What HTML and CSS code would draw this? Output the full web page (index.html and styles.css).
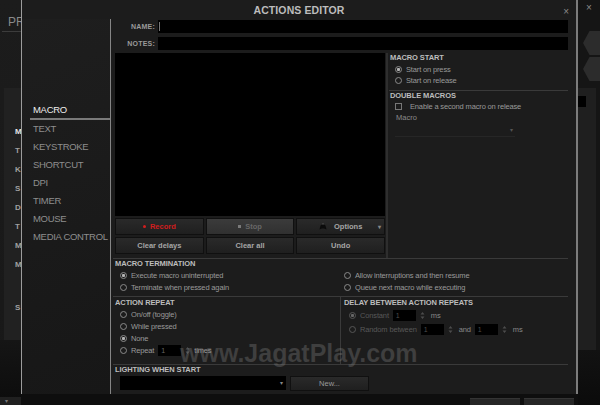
FILE: index.html
```html
<!DOCTYPE html>
<html lang="en">
<head>
    <meta charset="UTF-8">
    <meta name="viewport" content="width=device-width, initial-scale=1.0">
    <title>Actions Editor</title>
    <link rel="stylesheet" href="styles.css">
</head>
<body>
    <div class="app">
        <!-- app behind the dialog, left edge -->
        <div class="side-left">
            <div class="side-top"><span class="side-tab">PR</span></div>
            <div class="side-panel">
                <div class="side-item active">M</div>
                <div class="side-item">T</div>
                <div class="side-item">K</div>
                <div class="side-item">S</div>
                <div class="side-item">D</div>
                <div class="side-item">T</div>
                <div class="side-item">M</div>
                <div class="side-item">M</div>
                <div class="side-item gap">S</div>
            </div>
            <div class="side-bottom">
                <div class="side-bar">▾</div>
            </div>
        </div>

        <div class="center">
            <div class="dialog">
                <div class="dialog-head">
                    <span></span>
                    <span class="dialog-title">ACTIONS EDITOR</span>
                    <span class="dialog-close">×</span>
                </div>
                <div class="dialog-body">
                    <nav class="nav">
                        <div class="nav-item active">MACRO</div>
                        <div class="nav-item">TEXT</div>
                        <div class="nav-item">KEYSTROKE</div>
                        <div class="nav-item">SHORTCUT</div>
                        <div class="nav-item">DPI</div>
                        <div class="nav-item">TIMER</div>
                        <div class="nav-item">MOUSE</div>
                        <div class="nav-item">MEDIA CONTROL</div>
                    </nav>

                    <div class="editor">
                        <div class="fields">
                            <div class="field">
                                <span class="field-label">NAME:</span>
                                <div class="input"><span class="caret"></span></div>
                            </div>
                            <div class="field">
                                <span class="field-label">NOTES:</span>
                                <div class="input"></div>
                            </div>
                        </div>

                        <div class="upper">
                            <div class="macro-col">
                                <div class="macro-list"></div>
                                <div class="btn-grid">
                                    <div class="btn btn-record"><span class="rec-dot"></span>Record</div>
                                    <div class="btn btn-stop"><span class="stop-sq"></span>Stop</div>
                                    <div class="btn btn-options">
                                        <span></span>
                                        <span class="opt-label">
                                            <svg class="opt-icon" viewBox="0 0 8 7"><path d="M0.5 6.5 1.5 2.5 3 1.5 5 1.5 6.5 2.5 7.5 6.5 5 5.5 3 5.5Z" fill="#0b0b0b"/><rect x="3" y="0" width="2" height="1.5" fill="#3c3c3c"/></svg>
                                            Options
                                        </span>
                                        <span class="opt-caret">▾</span>
                                    </div>
                                    <div class="btn">Clear delays</div>
                                    <div class="btn">Clear all</div>
                                    <div class="btn">Undo</div>
                                </div>
                            </div>

                            <div class="start-col">
                                <div class="section-title">MACRO START</div>
                                <div class="start-list">
                                    <div class="opt-row"><span class="radio on"></span>Start on press</div>
                                    <div class="opt-row"><span class="radio"></span>Start on release</div>
                                </div>
                                <div class="sub-rule"></div>
                                <div class="section-title">DOUBLE MACROS</div>
                                <div class="opt-row check-row"><span class="check"></span>Enable a second macro on release</div>
                                <div class="macro-label">Macro</div>
                                <div class="select-line">▾</div>
                            </div>
                        </div>

                        <div class="rule"></div>

                        <div class="term">
                            <div class="section-title">MACRO TERMINATION</div>
                            <div class="term-grid">
                                <div class="opt-row"><span class="radio on"></span>Execute macro uninterrupted</div>
                                <div class="opt-row"><span class="radio"></span>Allow interruptions and then resume</div>
                                <div class="opt-row"><span class="radio"></span>Terminate when pressed again</div>
                                <div class="opt-row"><span class="radio"></span>Queue next macro while executing</div>
                            </div>
                        </div>

                        <div class="rule"></div>

                        <div class="repeat">
                            <div class="repeat-col">
                                <div class="section-title">ACTION REPEAT</div>
                                <div class="opt-row"><span class="radio"></span>On/off (toggle)</div>
                                <div class="opt-row"><span class="radio"></span>While pressed</div>
                                <div class="opt-row"><span class="radio on"></span>None</div>
                                <div class="opt-row">
                                    <span class="radio"></span>Repeat
                                    <span class="num">1</span>
                                    <svg class="spin" viewBox="0 0 5 9"><path d="M0.5 3.5 2.5 1 4.5 3.5ZM0.5 5.5 2.5 8 4.5 5.5Z" fill="#4c4c4c"/></svg>
                                    times
                                </div>
                            </div>
                            <div class="delay-col">
                                <div class="section-title">DELAY BETWEEN ACTION REPEATS</div>
                                <div class="opt-row">
                                    <span class="radio on"></span>Constant
                                    <span class="num">1</span>
                                    <svg class="spin" viewBox="0 0 5 9"><path d="M0.5 3.5 2.5 1 4.5 3.5ZM0.5 5.5 2.5 8 4.5 5.5Z" fill="#4c4c4c"/></svg>
                                    <span class="unit">ms</span>
                                </div>
                                <div class="opt-row">
                                    <span class="radio"></span>Random between
                                    <span class="num">1</span>
                                    <svg class="spin" viewBox="0 0 5 9"><path d="M0.5 3.5 2.5 1 4.5 3.5ZM0.5 5.5 2.5 8 4.5 5.5Z" fill="#4c4c4c"/></svg>
                                    <span class="unit">and</span>
                                    <span class="num">1</span>
                                    <svg class="spin" viewBox="0 0 5 9"><path d="M0.5 3.5 2.5 1 4.5 3.5ZM0.5 5.5 2.5 8 4.5 5.5Z" fill="#4c4c4c"/></svg>
                                    <span class="unit">ms</span>
                                </div>
                            </div>
                        </div>

                        <div class="rule"></div>

                        <div class="lighting">
                            <div class="section-title">LIGHTING WHEN START</div>
                            <div class="lighting-row">
                                <div class="select">▾</div>
                                <div class="btn btn-new">New...</div>
                            </div>
                        </div>
                    </div>
                </div>
                <div class="watermark">www.JagatPlay.com</div>
            </div>
            <div class="footer-bar">
                <span class="footer-btn"></span>
                <span class="footer-btn"></span>
            </div>
        </div>

        <!-- app behind the dialog, right edge -->
        <div class="side-right">
            <div class="rs-top">×</div>
            <div class="rs-hexes">
                <span class="hex"></span>
                <span class="hex"></span>
            </div>
            <div class="rs-panel"><span class="rs-key"></span></div>
            <div class="rs-bottom"></div>
        </div>
    </div>
</body>
</html>
```

FILE: styles.css
```css
* {
    box-sizing: border-box;
}
body {
    margin: 0;
    width: 600px;
    height: 405px;
    overflow: hidden;
    background-color: #121212;
    font-family: "Liberation Sans", Arial, sans-serif;
    color: #999;
}
.app {
    display: flex;
    height: 405px;
}

/* background app - left strip */
.side-left {
    width: 21px;
    flex-shrink: 0;
    overflow: hidden;
    display: flex;
    flex-direction: column;
    background: linear-gradient(#1c1c1c, #181818);
}
.side-top {
    height: 88px;
    flex-shrink: 0;
    padding: 16px 0 0 2px;
}
.side-tab {
    display: block;
    padding: 0 0 3px 6px;
    font-size: 12px;
    line-height: 12px;
    color: #8a8a8a;
    white-space: nowrap;
    border-bottom: 1px solid #3c3c3c;
}
.side-panel {
    height: 252px;
    flex-shrink: 0;
    margin-left: 4px;
    padding: 34px 0 0 11px;
    background: #212121;
}
.side-item {
    height: 19px;
    line-height: 19px;
    font-size: 8px;
    font-weight: bold;
    color: #a0a0a0;
    white-space: nowrap;
}
.side-item.active {
    color: #e6e6e6;
}
.side-item.gap {
    margin-top: 24px;
}
.side-bottom {
    flex: 1;
    display: flex;
    flex-direction: column;
    justify-content: flex-end;
    background: linear-gradient(#151515, #0c0c0c);
}
.side-bar {
    height: 8px;
    padding-left: 5px;
    background: #202020;
    font-size: 6px;
    line-height: 8px;
    color: #777;
}

/* dialog */
.center {
    width: 557px;
    flex-shrink: 0;
    display: flex;
    flex-direction: column;
}
.dialog {
    position: relative;
    height: 394px;
    flex-shrink: 0;
    background: #1c1c1c;
    border-left: 1px solid #9c9c9c;
    border-right: 2px solid #7c7c7c;
}
.dialog-head {
    height: 19px;
    display: grid;
    grid-template-columns: 1fr auto 1fr;
    align-items: center;
}
.dialog-title {
    font-size: 10.5px;
    font-weight: bold;
    color: #bdbdbd;
    letter-spacing: 0.1px;
}
.dialog-close {
    justify-self: end;
    padding: 4px 7px 0 0;
    font-size: 10px;
    color: #8a8a8a;
}
.dialog-body {
    display: flex;
    height: 375px;
}
.nav {
    width: 89px;
    flex-shrink: 0;
    padding-top: 83px;
    background: linear-gradient(160deg, #1e1e1e, #171717);
    border-right: 1px solid #858585;
}
.nav-item {
    height: 18px;
    line-height: 18px;
    padding-left: 11px;
    font-size: 9.5px;
    letter-spacing: -0.3px;
    color: #8e8e8e;
    white-space: nowrap;
}
.nav-item.active {
    margin-left: 8px;
    padding-left: 3px;
    line-height: 16px;
    color: #ededed;
    border-bottom: 2px solid #7a7a7a;
}

.editor {
    flex: 1;
    display: flex;
    flex-direction: column;
    padding: 1px 8px 0 4px;
}
.fields {
    display: flex;
    flex-direction: column;
    gap: 4px;
    margin-bottom: 3px;
}
.field {
    display: flex;
    align-items: center;
    gap: 3px;
    height: 13px;
}
.field-label {
    width: 40px;
    text-align: right;
    font-size: 7px;
    font-weight: bold;
    letter-spacing: 0.2px;
    color: #9a9a9a;
}
.input {
    flex: 1;
    height: 13px;
    padding: 2px 0 0 1px;
    background: #000;
}
.caret {
    display: block;
    width: 1px;
    height: 9px;
    background: #777;
}

.upper {
    display: grid;
    grid-template-columns: 271px 1fr;
    height: 205px;
    flex-shrink: 0;
}
.macro-col {
    display: flex;
    flex-direction: column;
    gap: 2px;
    padding-right: 1px;
}
.macro-list {
    height: 163px;
    background: #000;
}
.btn-grid {
    display: grid;
    grid-template-columns: repeat(3, 1fr);
    grid-auto-rows: 17px;
    gap: 2px;
}
.btn {
    display: flex;
    align-items: center;
    justify-content: center;
    gap: 4px;
    background: linear-gradient(#2a2a2a, #1f1f1f);
    border: 1px solid #101010;
    font-size: 7.5px;
    font-weight: bold;
    color: #a6a6a6;
}
.btn-record {
    color: #d11e1e;
}
.rec-dot {
    width: 3px;
    height: 3px;
    border-radius: 50%;
    background: #d11e1e;
}
.btn-stop {
    background: linear-gradient(#3b3b3b, #303030);
    color: #676767;
}
.stop-sq {
    width: 3px;
    height: 3px;
    background: #7a7a7a;
}
.btn-options {
    display: grid;
    grid-template-columns: 1fr auto 1fr;
}
.opt-label {
    display: flex;
    align-items: center;
    gap: 7px;
}
.opt-icon {
    width: 8px;
    height: 7px;
}
.opt-caret {
    justify-self: end;
    padding-right: 3px;
    font-size: 6px;
    color: #888;
}

.section-title {
    font-size: 7.5px;
    font-weight: bold;
    letter-spacing: -0.1px;
    color: #bdbdbd;
    white-space: nowrap;
}
.opt-row {
    display: flex;
    align-items: center;
    gap: 4px;
    font-size: 7.5px;
    letter-spacing: -0.15px;
    color: #9a9a9a;
    white-space: nowrap;
}
.radio {
    width: 7px;
    height: 7px;
    flex-shrink: 0;
    border-radius: 50%;
    border: 1px solid #8a8a8a;
}
.radio.on {
    background: radial-gradient(circle, #b4b4b4 0 1.3px, transparent 1.8px);
}
.check {
    width: 7px;
    height: 7px;
    flex-shrink: 0;
    border: 1px solid #777;
}

.start-col {
    border-left: 2px solid #2e2e2e;
    padding-left: 1px;
}
.start-col .section-title {
    height: 9px;
    line-height: 9px;
    padding-left: 1px;
}
.start-list {
    margin-top: 2px;
}
.start-col .opt-row {
    height: 11px;
    padding-left: 6px;
}
.sub-rule {
    height: 1px;
    margin-top: 4px;
    background: #3a3a3a;
}
.start-col .check-row {
    margin-top: 1px;
    gap: 8px;
}
.macro-label {
    height: 12px;
    line-height: 12px;
    padding-left: 7px;
    font-size: 7.5px;
    color: #8a8a8a;
}
.select-line {
    width: 120px;
    height: 13px;
    margin-left: 6px;
    padding-right: 2px;
    text-align: right;
    font-size: 6px;
    line-height: 13px;
    color: #555;
    border-bottom: 1px solid #262626;
}

.rule {
    height: 1px;
    flex-shrink: 0;
    margin-left: -2px;
    background: #3a3a3a;
}

.term {
    height: 37px;
    flex-shrink: 0;
}
.term .section-title {
    height: 10px;
    line-height: 10px;
}
.term-grid {
    display: grid;
    grid-template-columns: 224px 1fr;
    grid-auto-rows: 12px;
    padding-left: 5px;
}

.repeat {
    height: 67px;
    flex-shrink: 0;
    display: grid;
    grid-template-columns: 225px 1fr;
}
.repeat .section-title {
    height: 11px;
    line-height: 11px;
}
.repeat-col .opt-row {
    height: 12px;
    padding-left: 5px;
}
.delay-col {
    border-left: 1px solid #3a3a3a;
    padding-left: 3px;
}
.delay-col .opt-row {
    height: 14px;
    padding-left: 5px;
    color: #585858;
}
.delay-col .radio {
    border-color: #555;
}
.delay-col .radio.on {
    background: radial-gradient(circle, #666 0 1.3px, transparent 1.8px);
}
.num {
    width: 23px;
    height: 11px;
    padding-left: 3px;
    background: #000;
    font-size: 7px;
    line-height: 11px;
    color: #4c4c4c;
}
.repeat-col .num {
    color: #666;
}
.spin {
    width: 5px;
    height: 9px;
    flex-shrink: 0;
}
.unit {
    margin-left: 2px;
    color: #888;
}

.lighting {
    height: 29px;
    flex-shrink: 0;
}
.lighting .section-title {
    height: 9px;
    line-height: 9px;
}
.lighting-row {
    display: flex;
    gap: 4px;
    margin-top: 2px;
    padding-left: 5px;
}
.select {
    width: 166px;
    height: 14px;
    padding-right: 3px;
    background: #000;
    text-align: right;
    font-size: 6px;
    line-height: 14px;
    color: #888;
}
.btn-new {
    width: 79px;
    height: 15px;
    font-weight: normal;
    color: #9a9a9a;
}

.watermark {
    position: absolute;
    left: 158px;
    top: 339px;
    font-size: 25px;
    font-weight: bold;
    color: rgba(130, 130, 130, 0.34);
    white-space: nowrap;
    pointer-events: none;
}

.footer-bar {
    flex: 1;
    display: flex;
    justify-content: flex-end;
    gap: 4px;
    padding: 4px 4px 0 0;
    background: #0e0e0e;
}
.footer-btn {
    width: 50px;
    background: #262626;
    border-top: 1px solid #343434;
}

/* background app - right strip */
.side-right {
    flex: 1;
    display: flex;
    flex-direction: column;
    overflow: hidden;
    background: #151515;
}
.rs-top {
    height: 28px;
    flex-shrink: 0;
    padding: 2px 0 0 8px;
    font-size: 10px;
    color: #8a8a8a;
}
.rs-hexes {
    height: 60px;
    flex-shrink: 0;
    display: flex;
    flex-direction: column;
    gap: 2px;
    padding: 3px 0 0 5px;
}
.hex {
    display: block;
    width: 26px;
    height: 24px;
    background: #2c2c2c;
    clip-path: polygon(25% 0, 75% 0, 100% 50%, 75% 100%, 25% 100%, 0 50%);
}
.rs-panel {
    height: 262px;
    flex-shrink: 0;
    margin-right: 4px;
    padding-top: 8px;
    background: #1f1f1f;
}
.rs-key {
    display: block;
    width: 8px;
    height: 11px;
    background: #000;
}
.rs-bottom {
    flex: 1;
    background: linear-gradient(#121212, #0b0b0b);
}
```
